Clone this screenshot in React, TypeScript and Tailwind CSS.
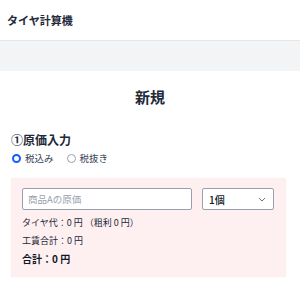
import React from "react";

export default function App() {
  return (
    <div
      className="w-[300px] h-[286px] bg-white text-gray-800 overflow-hidden"
      style={{ fontFamily: '"Noto Sans CJK JP", "Noto Sans", sans-serif' }}
    >
      <header className="h-[41px] flex items-center px-[7px] border-b border-gray-200 bg-white">
        <span className="text-[11px] font-bold leading-none">タイヤ計算機</span>
      </header>
      <div className="h-[30px] bg-gray-100" />
      <main className="pt-[16px] px-[11px]">
        <h1 className="text-center text-[15px] font-bold leading-[20px]">新規</h1>
        <h2 className="mt-[25px] text-[12px] font-bold leading-[16px]">①原価入力</h2>
        <div className="mt-[4px] flex items-center h-[12px] text-[9.5px] leading-[12px] text-gray-700">
          <label className="flex items-center">
            <span className="w-[9px] h-[9px] rounded-full border-[2.5px] border-blue-600 bg-white mr-[4px] ml-[1px]" />
            <span>税込み</span>
          </label>
          <label className="flex items-center ml-[13px]">
            <span className="w-[9px] h-[9px] rounded-full border border-gray-400 bg-white mr-[4px]" />
            <span>税抜き</span>
          </label>
        </div>
        <div className="mt-[14px] w-[275px] bg-[#fef0f0] rounded-[3px] shadow-[0_0_1px_rgba(0,0,0,0.15)] pt-[10px] pb-[9px] pl-[11px] pr-[12px]">
          <div className="flex items-center gap-[10px]">
            <input
              className="w-[170px] h-[22px] bg-white border border-gray-400 rounded-[2px] px-[5px] text-[9.5px] placeholder:text-gray-400 outline-none"
              placeholder="商品Aの原価"
            />
            <div className="w-[72px] h-[22px] bg-white border border-gray-400 rounded-[2px] flex items-center justify-between pl-[6px] pr-[7px]">
              <span className="text-[10px] font-medium text-gray-900">1個</span>
              <svg width="8" height="5" viewBox="0 0 8 5" fill="none">
                <path d="M1 1l3 3 3-3" stroke="#6b7280" strokeWidth="1" />
              </svg>
            </div>
          </div>
          <div className="mt-[4px] text-[9px] leading-[18px] text-gray-800">
            タイヤ代：0 円 （粗利 0 円）
          </div>
          <div className="text-[9px] leading-[18px] text-gray-800">工賃合計：0 円</div>
          <div className="text-[10px] leading-[18px] font-bold text-gray-900">合計：0 円</div>
        </div>
      </main>
    </div>
  );
}
